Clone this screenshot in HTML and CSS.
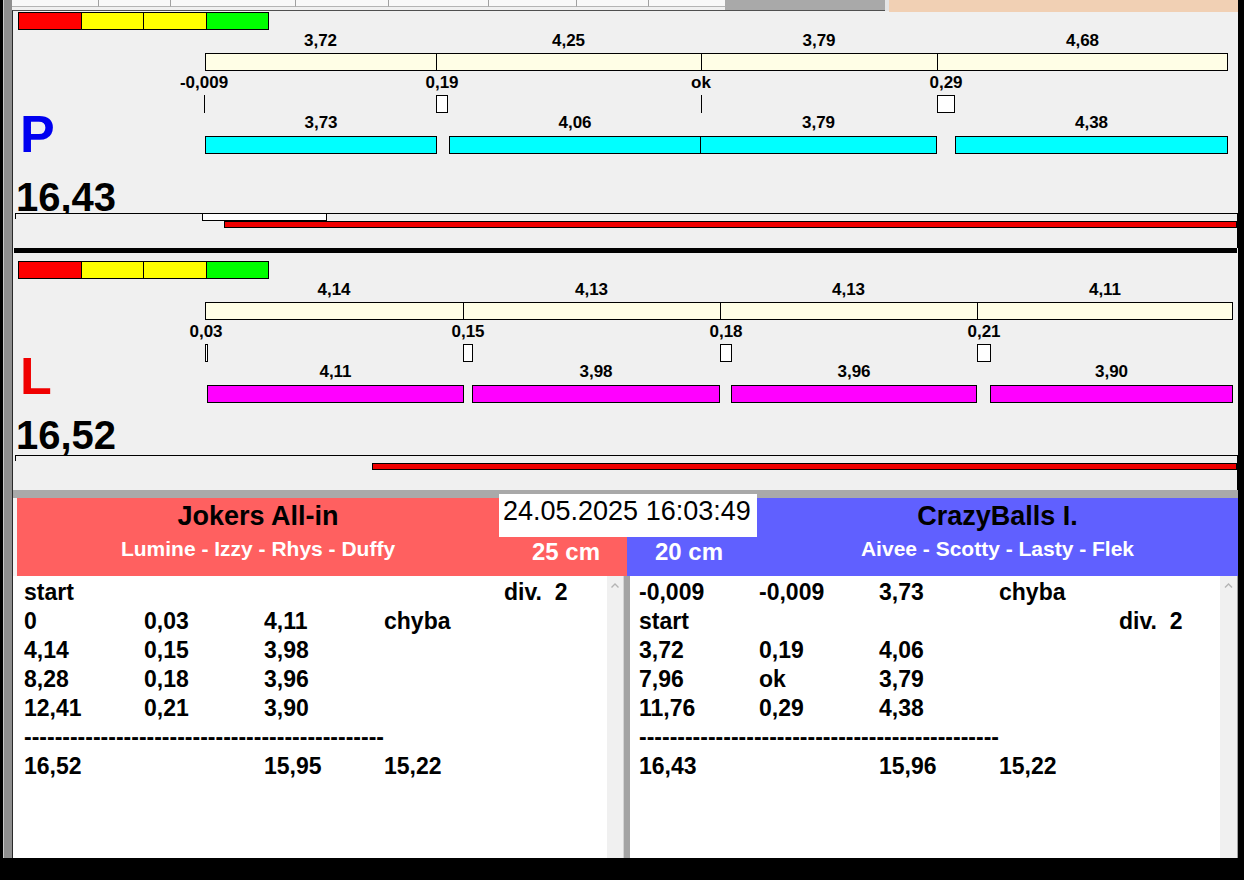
FILE: index.html
```html
<!DOCTYPE html>
<html>
<head>
<meta charset="utf-8">
<link rel="stylesheet" href="styles.css">
</head>
<body>
<div class="window">
  <div class="gutter"></div>
  <div class="main">
    <div class="tabs">
      <div class="tab t1"></div><div class="tab t2"></div><div class="tab t3"></div><div class="tab t4"></div>
      <div class="tab t5"></div><div class="tab t6"></div><div class="tab t7"></div><div class="tab t8"></div>
      <div class="tabs-dark"></div><div class="tabs-edge"></div><div class="tabs-peach"></div>
    </div>
    <div class="content">
      <!-- P panel -->
      <div class="panel panel-p">
        <div class="levels"><div class="lv red"></div><div class="lv yellow"></div><div class="lv yellow"></div><div class="lv green"></div></div>
        <div class="panel-body">
          <div class="side"><div class="letter letter-p">P</div></div>
          <div class="chart">
            <div class="seg-labels">
              <span class="seg-label" style="width:231px">3,72</span>
              <span class="seg-label" style="width:265px">4,25</span>
              <span class="seg-label" style="width:236px">3,79</span>
              <span class="seg-label" style="width:291px">4,68</span>
            </div>
            <div class="meter">
              <div class="cell" style="width:230px"></div>
              <div class="cell" style="width:265px"></div>
              <div class="cell" style="width:236px"></div>
              <div class="cell" style="width:290px"></div>
            </div>
            <div class="gap-labels">
              <span class="gap-label" style="margin-left:-1px">-0,009</span>
              <span class="gap-label" style="margin-left:238px">0,19</span>
              <span class="gap-label" style="margin-left:259px">ok</span>
              <span class="gap-label" style="margin-left:245px">0,29</span>
            </div>
            <div class="markers">
              <div class="mark line" style="margin-left:-1px"></div>
              <div class="mark box" style="margin-left:231px;width:12px"></div>
              <div class="mark line" style="margin-left:253px"></div>
              <div class="mark box" style="margin-left:235px;width:18px"></div>
            </div>
            <div class="throw-labels">
              <span class="seg-label" style="margin-left:0;width:232px">3,73</span>
              <span class="seg-label" style="margin-left:12px;width:252px">4,06</span>
              <span class="seg-label" style="margin-left:-1px;width:237px">3,79</span>
              <span class="seg-label" style="margin-left:18px;width:273px">4,38</span>
            </div>
            <div class="throws">
              <div class="throw cyan" style="margin-left:0;width:232px"></div>
              <div class="throw cyan" style="margin-left:12px;width:252px"></div>
              <div class="throw cyan" style="margin-left:-1px;width:237px"></div>
              <div class="throw cyan" style="margin-left:18px;width:273px"></div>
            </div>
          </div>
        </div>
        <div class="spacer"></div>
        <div class="total">16,43</div>
        <div class="progress">
          <div class="track"><div class="tick"></div><div class="white-rect" style="margin-left:186px;width:125px"></div></div>
          <div class="redbar" style="margin-left:209px"></div>
        </div>
      </div>

      <div class="separator"></div>

      <!-- L panel -->
      <div class="panel panel-l">
        <div class="levels"><div class="lv red"></div><div class="lv yellow"></div><div class="lv yellow"></div><div class="lv green"></div></div>
        <div class="panel-body">
          <div class="side"><div class="letter letter-l">L</div></div>
          <div class="chart">
            <div class="seg-labels">
              <span class="seg-label" style="width:258px">4,14</span>
              <span class="seg-label" style="width:257px">4,13</span>
              <span class="seg-label" style="width:257px">4,13</span>
              <span class="seg-label" style="width:256px">4,11</span>
            </div>
            <div class="meter">
              <div class="cell" style="width:257px"></div>
              <div class="cell" style="width:257px"></div>
              <div class="cell" style="width:257px"></div>
              <div class="cell" style="width:255px"></div>
            </div>
            <div class="gap-labels">
              <span class="gap-label" style="margin-left:1px">0,03</span>
              <span class="gap-label" style="margin-left:262px">0,15</span>
              <span class="gap-label" style="margin-left:258px">0,18</span>
              <span class="gap-label" style="margin-left:258px">0,21</span>
            </div>
            <div class="markers">
              <div class="mark box" style="margin-left:0;width:3px"></div>
              <div class="mark box" style="margin-left:255px;width:10px"></div>
              <div class="mark box" style="margin-left:247px;width:12px"></div>
              <div class="mark box" style="margin-left:245px;width:14px"></div>
            </div>
            <div class="throw-labels">
              <span class="seg-label" style="margin-left:2px;width:257px">4,11</span>
              <span class="seg-label" style="margin-left:8px;width:248px">3,98</span>
              <span class="seg-label" style="margin-left:11px;width:246px">3,96</span>
              <span class="seg-label" style="margin-left:13px;width:243px">3,90</span>
            </div>
            <div class="throws">
              <div class="throw magenta" style="margin-left:2px;width:257px"></div>
              <div class="throw magenta" style="margin-left:8px;width:248px"></div>
              <div class="throw magenta" style="margin-left:11px;width:246px"></div>
              <div class="throw magenta" style="margin-left:13px;width:243px"></div>
            </div>
          </div>
        </div>
        <div class="spacer"></div>
        <div class="total">16,52</div>
        <div class="progress">
          <div class="track"><div class="tick"></div></div>
          <div class="redbar" style="margin-left:357px"></div>
        </div>
      </div>

      <div class="band"></div>

      <div class="header-wrap">
        <div class="header">
          <div class="team team-left">
            <div class="team-name">Jokers All-in</div>
            <div class="players">Lumine - Izzy - Rhys - Duffy</div>
          </div>
          <div class="dist dist-left">25 cm</div>
          <div class="dist dist-right">20 cm</div>
          <div class="team team-right">
            <div class="team-name">CrazyBalls I.</div>
            <div class="players">Aivee - Scotty - Lasty - Flek</div>
          </div>
          <div class="datebox">24.05.2025 16:03:49</div>
        </div>
      </div>

      <div class="lower">
        <div class="list list-left">
          <div class="row"><span>start</span><span></span><span></span><span></span><span>div.&nbsp;&nbsp;2</span></div>
          <div class="row"><span>0</span><span>0,03</span><span>4,11</span><span>chyba</span></div>
          <div class="row"><span>4,14</span><span>0,15</span><span>3,98</span></div>
          <div class="row"><span>8,28</span><span>0,18</span><span>3,96</span></div>
          <div class="row"><span>12,41</span><span>0,21</span><span>3,90</span></div>
          <div class="row dashes">-----------------------------------------------</div>
          <div class="row"><span>16,52</span><span></span><span>15,95</span><span>15,22</span></div>
        </div>
        <div class="scroll">
          <svg class="chev" width="16" height="12" viewBox="0 0 16 12"><polyline points="4.5,8.5 8,5 11.5,8.5" fill="none" stroke="#b4b4b4" stroke-width="1.4"/></svg>
        </div>
        <div class="splitter"></div>
        <div class="list list-right">
          <div class="row"><span>-0,009</span><span>-0,009</span><span>3,73</span><span>chyba</span></div>
          <div class="row"><span>start</span><span></span><span></span><span></span><span>div.&nbsp;&nbsp;2</span></div>
          <div class="row"><span>3,72</span><span>0,19</span><span>4,06</span></div>
          <div class="row"><span>7,96</span><span>ok</span><span>3,79</span></div>
          <div class="row"><span>11,76</span><span>0,29</span><span>4,38</span></div>
          <div class="row dashes">-----------------------------------------------</div>
          <div class="row"><span>16,43</span><span></span><span>15,96</span><span>15,22</span></div>
        </div>
        <div class="scroll scroll-right">
          <svg class="chev" width="17" height="12" viewBox="0 0 17 12"><polyline points="5,8.5 8.5,5 12,8.5" fill="none" stroke="#b4b4b4" stroke-width="1.4"/></svg>
        </div>
        <div class="edge"></div>
      </div>
    </div>
  </div>
</div>
</body>
</html>
```

FILE: styles.css
```css
html, body {
  margin: 0;
  padding: 0;
}
body {
  background: #000;
  width: 1244px;
  height: 880px;
  overflow: hidden;
  font-family: "Liberation Sans", Arial, sans-serif;
  color: #000;
}
.window {
  display: flex;
  margin-left: 3px;
  width: 1235px;
  height: 858px;
}
.gutter {
  flex: none;
  width: 9px;
  box-sizing: border-box;
  border-left: 1px solid #c8c8c8;
  background: #8e8e8e;
}
.main {
  flex: none;
  width: 1226px;
  display: flex;
  flex-direction: column;
}

/* tab strip */
.tabs {
  flex: none;
  height: 10px;
  display: flex;
  align-items: flex-start;
  background: #f0f0f0;
  position: relative;
  z-index: 1;
}
.tab {
  flex: none;
  height: 7px;
  box-sizing: border-box;
  background: #f8f8f8;
  border-right: 1px solid #a0a0a0;
  border-bottom: 1px solid #b4b4b4;
}
.t1 { width: 87px; }
.t2 { width: 72px; }
.t3 { width: 125px; }
.t4 { width: 93px; }
.t5 { width: 100px; }
.t6 { width: 88px; }
.t7 { width: 72px; }
.t8 { width: 76px; border-right: none; }
.tabs-dark {
  flex: none;
  width: 160px;
  height: 10px;
  background: #a9a9a9;
}
.tabs-edge {
  flex: none;
  width: 4px;
  height: 11px;
  background: #e4e4e4;
}
.tabs-peach {
  flex: 1;
  height: 12px;
  background: #f1d0b4;
}

/* content */
.content {
  flex: 1;
  display: flex;
  flex-direction: column;
  border-left: 1px solid #2a2a2a;
  border-top: 1px solid #505050;
  background: #f0f0f0;
}
.panel {
  flex: none;
  height: 237px;
  box-sizing: border-box;
  display: flex;
  flex-direction: column;
}
.panel-p { padding-top: 1px; }
.panel-l { padding-top: 8px; }

.levels {
  flex: none;
  display: flex;
  margin-left: 5px;
  width: 251px;
  height: 18px;
  box-sizing: border-box;
  border: 1px solid #000;
}
.lv { flex: 1; }
.lv + .lv { border-left: 1px solid #000; }
.red { background: #ff0000; }
.yellow { background: #ffff00; }
.green { background: #00ff00; }

.panel-body {
  display: flex;
}
.side {
  flex: none;
  width: 192px;
  padding-left: 7px;
  box-sizing: border-box;
}
.letter {
  margin-top: 78px;
  font-size: 52px;
  line-height: 52px;
  font-weight: bold;
}
.letter-p { color: #0000f0; }
.letter-l { color: #f00000; margin-top: 71px; }

.chart {
  flex: none;
  width: 1033px;
}
.seg-labels, .throw-labels {
  display: flex;
  height: 20px;
}
.throw-labels { height: 19px; }
.seg-label {
  flex: none;
  text-align: center;
  font-size: 17px;
  font-weight: bold;
  line-height: 21px;
  white-space: nowrap;
}
.throw-labels .seg-label { line-height: 20px; }
.meter {
  display: flex;
  width: max-content;
  margin-top: 3px;
  height: 18px;
  box-sizing: border-box;
  border: 1px solid #000;
  background: #fffee6;
}
.cell {
  flex: none;
  box-sizing: border-box;
}
.cell + .cell { border-left: 1px solid #000; }

.gap-labels {
  display: flex;
  height: 22px;
}
.gap-label {
  flex: none;
  width: 0;
  display: flex;
  justify-content: center;
  white-space: nowrap;
  font-size: 17px;
  font-weight: bold;
  line-height: 23px;
}
.markers {
  display: flex;
  margin-top: 2px;
  height: 18px;
}
.mark {
  flex: none;
  height: 18px;
  box-sizing: border-box;
}
.mark.line {
  width: 1px;
  background: #000;
}
.mark.box {
  border: 1px solid #000;
  background: #fff;
}
.throws {
  display: flex;
  margin-top: 4px;
  height: 18px;
}
.throw {
  flex: none;
  height: 18px;
  box-sizing: border-box;
  border: 1px solid #000;
}
.cyan { background: #00ffff; }
.magenta { background: #ff00ff; }

.spacer { flex: 1; }
.total {
  flex: none;
  height: 36px;
  overflow: hidden;
  padding-left: 3px;
  font-size: 40px;
  line-height: 41px;
  font-weight: bold;
}
.panel-l .total {
  line-height: 33px;
  overflow: visible;
}

.progress {
  flex: none;
  height: 35px;
  margin-left: 2px;
  box-sizing: border-box;
  border-top: 1px solid #000;
  border-right: 1px solid #000;
  position: relative;
}
.track {
  display: flex;
  height: 8px;
  margin-top: -1px;
}
.tick {
  flex: none;
  width: 1px;
  height: 6px;
  background: #000;
}
.white-rect {
  flex: none;
  height: 8px;
  box-sizing: border-box;
  border: 1px solid #000;
  background: #fff;
}
.redbar {
  height: 7px;
  box-sizing: border-box;
  border: 1px solid #000;
  background: #f00000;
}

.separator {
  flex: none;
  height: 5px;
  margin: 0 1px;
  background: #000;
}
.band {
  flex: none;
  height: 8px;
  background: #a9a9a9;
}

/* header */
.header-wrap {
  flex: none;
  padding-left: 4px;
  background: #f4f4f4;
}
.header {
  position: relative;
  display: grid;
  grid-template-columns: 482px 128px 130px 481px;
  height: 78px;
}
.team {
  text-align: center;
  padding-top: 2px;
}
.team-left, .dist-left { background: #ff6060; }
.team-right, .dist-right { background: #6060ff; }
.team-name {
  font-size: 27px;
  line-height: 32px;
  font-weight: bold;
  color: #000;
}
.players {
  margin-top: 5px;
  font-size: 21px;
  line-height: 24px;
  font-weight: bold;
  color: #fff;
}
.dist {
  padding-top: 40px;
  font-size: 24px;
  line-height: 28px;
  font-weight: bold;
  color: #fff;
  white-space: nowrap;
}
.dist-left {
  text-align: right;
  padding-right: 27px;
}
.dist-right {
  text-align: left;
  padding-left: 28px;
}
.datebox {
  position: absolute;
  left: 482px;
  top: -4px;
  width: 258px;
  height: 43px;
  box-sizing: border-box;
  padding-left: 4px;
  padding-top: 1px;
  background: #fff;
  font-size: 27px;
  line-height: 32px;
  white-space: nowrap;
}

/* lists */
.lower {
  flex: 1;
  display: flex;
  padding-left: 4px;
  background: #fff;
}
.list {
  flex: none;
  width: 590px;
  box-sizing: border-box;
  padding-top: 2px;
  background: #fff;
}
.list-left { padding-left: 7px; }
.list-right { padding-left: 9px; }
.row {
  display: grid;
  grid-template-columns: 120px 120px 120px 120px 1fr;
  height: 29px;
  font-size: 23px;
  line-height: 29px;
  font-weight: bold;
  white-space: nowrap;
}
.row.dashes {
  display: block;
}
.scroll {
  flex: none;
  width: 16px;
  background: #f0f0f0;
}
.scroll-right { width: 17px; }
.chev {
  display: block;
  margin-top: 3px;
}
.splitter {
  flex: none;
  width: 7px;
  box-sizing: border-box;
  border-left: 1px solid #d4d4d4;
  background: #a4a4a4;
}
.edge {
  flex: none;
  width: 1px;
  background: #a0a0a0;
}
```
